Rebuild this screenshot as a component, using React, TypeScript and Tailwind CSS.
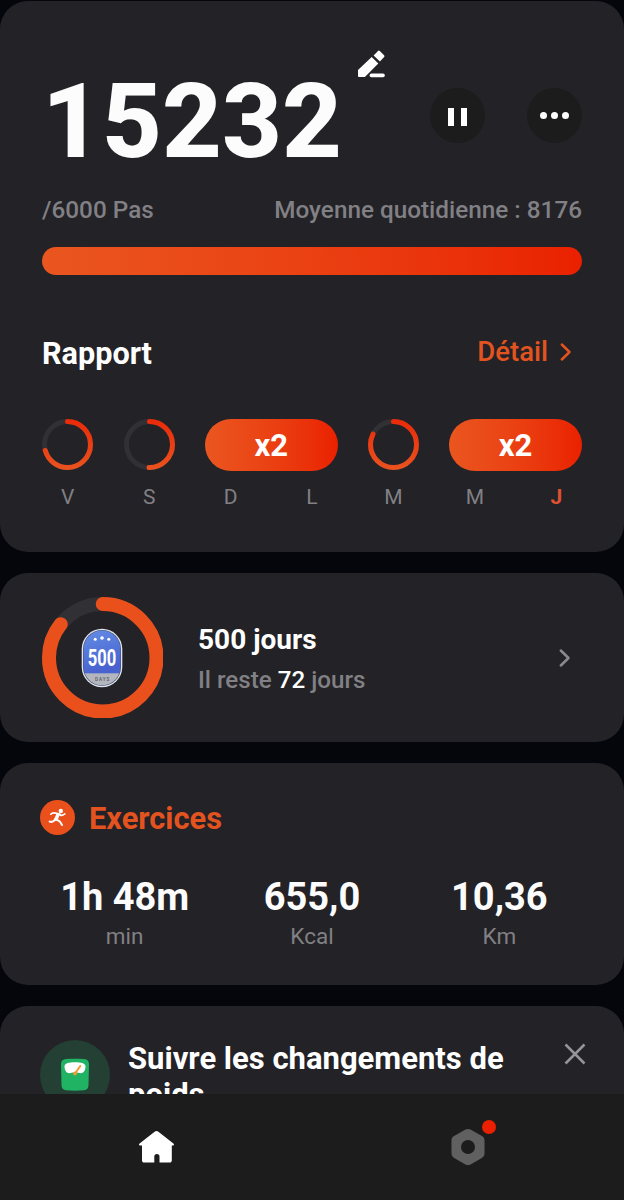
import type { ReactNode } from "react";

interface RingProps {
  size: number;
  stroke: number;
  progress: number;
  color: string;
}

const Ring = ({ size, stroke, progress, color }: RingProps) => {
  const c = size / 2;
  const r = (size - stroke) / 2;
  const length = 2 * Math.PI * r;
  return (
    <svg width={size} height={size} viewBox={`0 0 ${size} ${size}`} fill="none" className="block shrink-0">
      <defs>
        <linearGradient id="ring" gradientUnits="userSpaceOnUse" x1="0" y1="0" x2="0" y2="51">
          <stop offset="0" stopColor="#eb2908" />
          <stop offset="1" stopColor="#e9531f" />
        </linearGradient>
      </defs>
      <circle cx={c} cy={c} r={r} stroke="#313035" strokeWidth={stroke} />
      <path
        d={`M${c} ${c - r}a${r} ${r} 0 0 1 0 ${2 * r}a${r} ${r} 0 0 1 0 ${-2 * r}`}
        stroke={color}
        strokeWidth={stroke}
        strokeLinecap="round"
        strokeDasharray={`${length * progress} ${length}`}
      />
    </svg>
  );
};

const Card = ({ className, children }: { className: string; children: ReactNode }) => (
  <section className={`w-full shrink-0 bg-[#232227] ${className}`}>{children}</section>
);

const EditIcon = () => (
  <svg width="28" height="28" viewBox="0 0 28 28" fill="#fff">
    <path d="M1 20.1v6c0 .6.2.9.8.9h6.1L21.3 13.6l-6.6-6.6L1 20.1Z" />
    <path d="m16.600 5.400 4.400-4.500a1.300 1.300 0 0 1 1.800 0l4.300 4.300a1.300 1.300 0 0 1 0 1.800l-4.200 4.500z" />
    <rect x="12.6" y="23.5" width="15.2" height="3.8" rx="1.8" />
  </svg>
);

const BadgeIcon = () => (
  <svg width="42" height="60" viewBox="0 0 42 60" className="overflow-visible">
    <defs>
      <linearGradient id="badgeBlue" x1="0" y1="0" x2="0.3" y2="1">
        <stop offset="0" stopColor="#6590e6" />
        <stop offset="1" stopColor="#4862cf" />
      </linearGradient>
      <clipPath id="badgeShape">
        <rect x="2.6" y="2.6" width="36.8" height="54.8" rx="18.4" />
      </clipPath>
    </defs>
    <rect x=".7" y=".7" width="40.6" height="58.6" rx="20.3" fill="#dfe4ee" />
    <rect x="2" y="2" width="38" height="56" rx="19" fill="#4a5370" />
    <g clipPath="url(#badgeShape)">
      <rect width="42" height="46" fill="url(#badgeBlue)" />
      <rect y="45.3" width="42" height="15" fill="#b3b6bf" />
    </g>
    <circle cx="14.2" cy="11.3" r="1.5" fill="#fff" />
    <circle cx="21" cy="10" r="1.8" fill="#fff" />
    <circle cx="27.8" cy="11.3" r="1.5" fill="#fff" />
    <text
      x="21"
      y="38"
      textAnchor="middle"
      fontSize="23.5"
      fontWeight="700"
      textLength="28.5"
      lengthAdjust="spacingAndGlyphs"
      fill="#fff"
    >
      500
    </text>
    <text x="21.6" y="52.6" textAnchor="middle" fontSize="4.6" fontWeight="500" letterSpacing="1" fill="#55565e">
      DAYS
    </text>
  </svg>
);

const RunnerIcon = () => (
  <svg width="35" height="35" viewBox="0 0 35 35" fill="none">
    <circle cx="17.5" cy="17.5" r="17.5" fill="#ea501b" />
    <circle cx="20.8" cy="11" r="2.2" fill="#fff" />
    <g stroke="#fff" strokeLinecap="round" strokeLinejoin="round">
      <path d="M10.8 14.2c1.5-2 3-2 6.5-.7" strokeWidth="1.7" />
      <path d="m18 14.6-2 4.6" strokeWidth="3.6" />
      <path d="M19.6 14c1 2 2.6 1.8 5.2-.2" strokeWidth="1.7" />
      <path d="M15 19.4c-1.3 2.7-2.6 3-5.4 2.2" strokeWidth="2" />
      <path d="M16.4 19.7c3.5 1.3 4 2 5.6 5.3" strokeWidth="2" />
    </g>
  </svg>
);

const ScaleIcon = () => (
  <svg width="30" height="34" viewBox="0 0 30 34" fill="none">
    <path
      d="M6 1C12 .5 18 .5 24 1c3.300.3 5 2 5 5.300L28.500 27c-.1 3.500-1.500 5-4.500 5.300-6 .6-12 .6-18 0-3-.3-4.400-1.800-4.500-5.300L1 6.300C1 3 2.700 1.300 6 1Z"
      fill="#20b364"
    />
    <path
      d="M4.500 8.500c0-3.500 4.500-4.300 10.500-4.300s10.500.8 10.500 4.300c0 3-1.400 5.900-3.500 6.500-2 .5-3.200-.4-7-.4s-5 .9-7 .4c-2.100-.6-3.500-3.500-3.500-6.500Z"
      fill="#fff"
    />
    <path d="m15 15.500 5.300-7.500" stroke="#f29a2e" strokeWidth="2" strokeLinecap="round" />
    <circle cx="15" cy="15.500" r="2" fill="#f29a2e" />
  </svg>
);

const HomeIcon = () => (
  <svg width="35" height="32" viewBox="0 0 35 32" fill="#fff">
    <path d="M15.6.8a3 3 0 0 1 3.8 0l15 11.7c1 .8.5 2-.6 2h-1v14.7c0 1.5-.8 2.3-2.3 2.3h-10v-5.8a2.6 2.6 0 0 0-5.2 0v5.8h-10c-1.500 0-2.300-.8-2.300-2.300V14.500h-1.800c-1.100 0-1.600-1.200-.6-2z" />
  </svg>
);

const NutIcon = () => (
  <svg width="34" height="38" viewBox="0 0 34 38">
    <path
      d="M14.5 1.6a5 5 0 0 1 5 0l11.4 6.5c1.7 1 2.6 2.4 2.6 4.3v13.2c0 1.9-.9 3.3-2.6 4.3l-11.4 6.5a5 5 0 0 1-5 0L3.1 29.9C1.4 28.9.5 27.5.5 25.6V12.4c0-1.9.9-3.3 2.6-4.3z"
      fill="#606060"
    />
    <circle cx="17" cy="19" r="7" fill="#1c1c1d" />
  </svg>
);

const Chevron = ({ color }: { color: string }) => (
  <svg width="12" height="20" viewBox="0 0 12 20" fill="none" stroke={color} strokeWidth="2.5" className="shrink-0">
    <path d="m1.8 2.5 7.7 7.5-7.7 7.5" strokeLinecap="round" strokeLinejoin="round" />
  </svg>
);

const days = ["V", "S", "D", "L", "M", "M", "J"];

const stats = [
  { value: "1h 48m", unit: "min" },
  { value: "655,0", unit: "Kcal" },
  { value: "10,36", unit: "Km" },
];

const DayRing = ({ progress }: { progress: number }) => (
  <div className="flex justify-center">
    <Ring size={51} stroke={5} progress={progress} color="url(#ring)" />
  </div>
);

const DoublePill = () => (
  <div className="col-span-2 mx-[14.7px] flex h-[52px] items-center justify-center rounded-full bg-linear-to-r from-[#ea561f] to-[#ea2000] text-[31px] font-bold text-white">
    <span className="mt-[3px]">x2</span>
  </div>
);

export default function App() {
  return (
    <div className="flex h-[1200px] w-[624px] flex-col overflow-hidden bg-[#04060b] font-['Roboto',sans-serif] whitespace-nowrap text-white">
      <main className="flex min-h-0 flex-1 flex-col gap-[21px] overflow-hidden pt-px">
        <Card className="h-[551px] rounded-[28px]">
          <div className="flex h-[156px] items-start px-[42px]">
            <h1 className="mt-[59px] w-[316px] text-[104px] leading-[123px] font-extrabold text-[#fcfcfc]">15232</h1>
            <div className="mt-[49px] -ml-px">
              <EditIcon />
            </div>
            <div className="mt-[87px] ml-auto flex gap-[42px]">
              <button className="flex size-[55px] items-center justify-center gap-[7px] rounded-full bg-[#1c1c1d]">
                <span className="mt-[3px] h-[18px] w-[6px] bg-white" />
                <span className="mt-[3px] h-[18px] w-[6px] bg-white" />
              </button>
              <button className="flex size-[55px] items-center justify-center gap-[3.5px] rounded-full bg-[#1c1c1d]">
                <span className="size-[7.5px] rounded-full bg-white" />
                <span className="size-[7.5px] rounded-full bg-white" />
                <span className="size-[7.5px] rounded-full bg-white" />
              </button>
            </div>
          </div>

          <div className="mt-[39px] flex h-7 items-center justify-between px-[42px] text-[24.3px] font-medium text-[#818084]">
            <span>/6000 Pas</span>
            <span>Moyenne quotidienne : 8176</span>
          </div>
          <div className="mx-[42px] mt-[22.5px] h-[28px] rounded-full bg-linear-to-r from-[#ea561f] to-[#ea2000]" />

          <div className="mt-[59.5px] flex h-9 items-center justify-between pr-[52px] pl-[42px]">
            <h2 className="mt-[3px] text-[30.6px] leading-9 font-bold">Rapport</h2>
            <div className="flex items-center gap-[12px] text-[27.5px] leading-9 font-medium text-[#e2531f]">
              Détail
              <Chevron color="#e2531f" />
            </div>
          </div>

          <div className="mx-[27px] mt-[48.5px] grid grid-cols-7 items-center">
            <DayRing progress={0.703} />
            <DayRing progress={0.5} />
            <DoublePill />
            <DayRing progress={0.82} />
            <DoublePill />
          </div>
          <div className="mx-[27px] mt-[13px] grid grid-cols-7 text-center text-[21px] leading-[26px] text-[#818084]">
            {days.map((day, i) => (
              <span key={i} className={i === 6 ? "font-bold text-[#dd5132]" : ""}>
                {day}
              </span>
            ))}
          </div>
        </Card>

        <Card className="flex h-[169px] items-center rounded-[28px] pr-[53px] pl-[41.5px]">
          <div className="grid place-items-center *:col-start-1 *:row-start-1">
            <Ring size={121.5} stroke={14} progress={0.856} color="#ea501b" />
            <BadgeIcon />
          </div>
          <div className="mt-1 ml-[35px] flex-1">
            <p className="text-[28px] leading-[34px] font-bold">500 jours</p>
            <p className="mt-[7px] text-[24.2px] leading-8 font-medium text-[#818084]">
              Il reste <span className="text-white">72</span> jours
            </p>
          </div>
          <Chevron color="#8b8a8e" />
        </Card>

        <Card className="h-[222px] rounded-[28px] pt-[34px]">
          <div className="flex items-center gap-[14px] pl-10">
            <RunnerIcon />
            <h2 className="mt-1 text-[30.8px] leading-9 font-bold text-[#e2531f]">Exercices</h2>
          </div>
          <div className="mx-[31px] mt-[37px] grid grid-cols-3 text-center">
            {stats.map((stat) => (
              <div key={stat.unit}>
                <p className="text-[38px] leading-[46px] font-bold text-[#fcfcfc]">{stat.value}</p>
                <p className="mt-[2px] text-[22.5px] leading-7 text-[#818084]">{stat.unit}</p>
              </div>
            ))}
          </div>
        </Card>

        <Card className="flex h-[170px] items-start rounded-t-[28px] pr-[38px] pl-10">
          <div className="mt-[34px] flex size-[70px] items-center justify-center rounded-full bg-[#243f33]">
            <ScaleIcon />
          </div>
          <p className="mt-[35px] ml-[18px] flex-1 text-[31px] leading-9 font-bold">
            Suivre les changements de
            <br />
            poids
          </p>
          <svg width="22" height="22" viewBox="0 0 22 22" stroke="#96959a" strokeWidth="2.5" className="mt-[37px]">
            <path d="m1.5 1.5 19 19m0-19-19 19" />
          </svg>
        </Card>
      </main>

      <nav className="grid h-[106px] shrink-0 grid-cols-2 bg-[#1c1c1d]">
        <div className="flex items-center justify-center">
          <HomeIcon />
        </div>
        <div className="flex items-center justify-center">
          <div className="relative">
            <NutIcon />
            <span className="absolute -top-[8px] -right-[11px] size-[14px] rounded-full bg-[#ea2000]" />
          </div>
        </div>
      </nav>
    </div>
  );
}
